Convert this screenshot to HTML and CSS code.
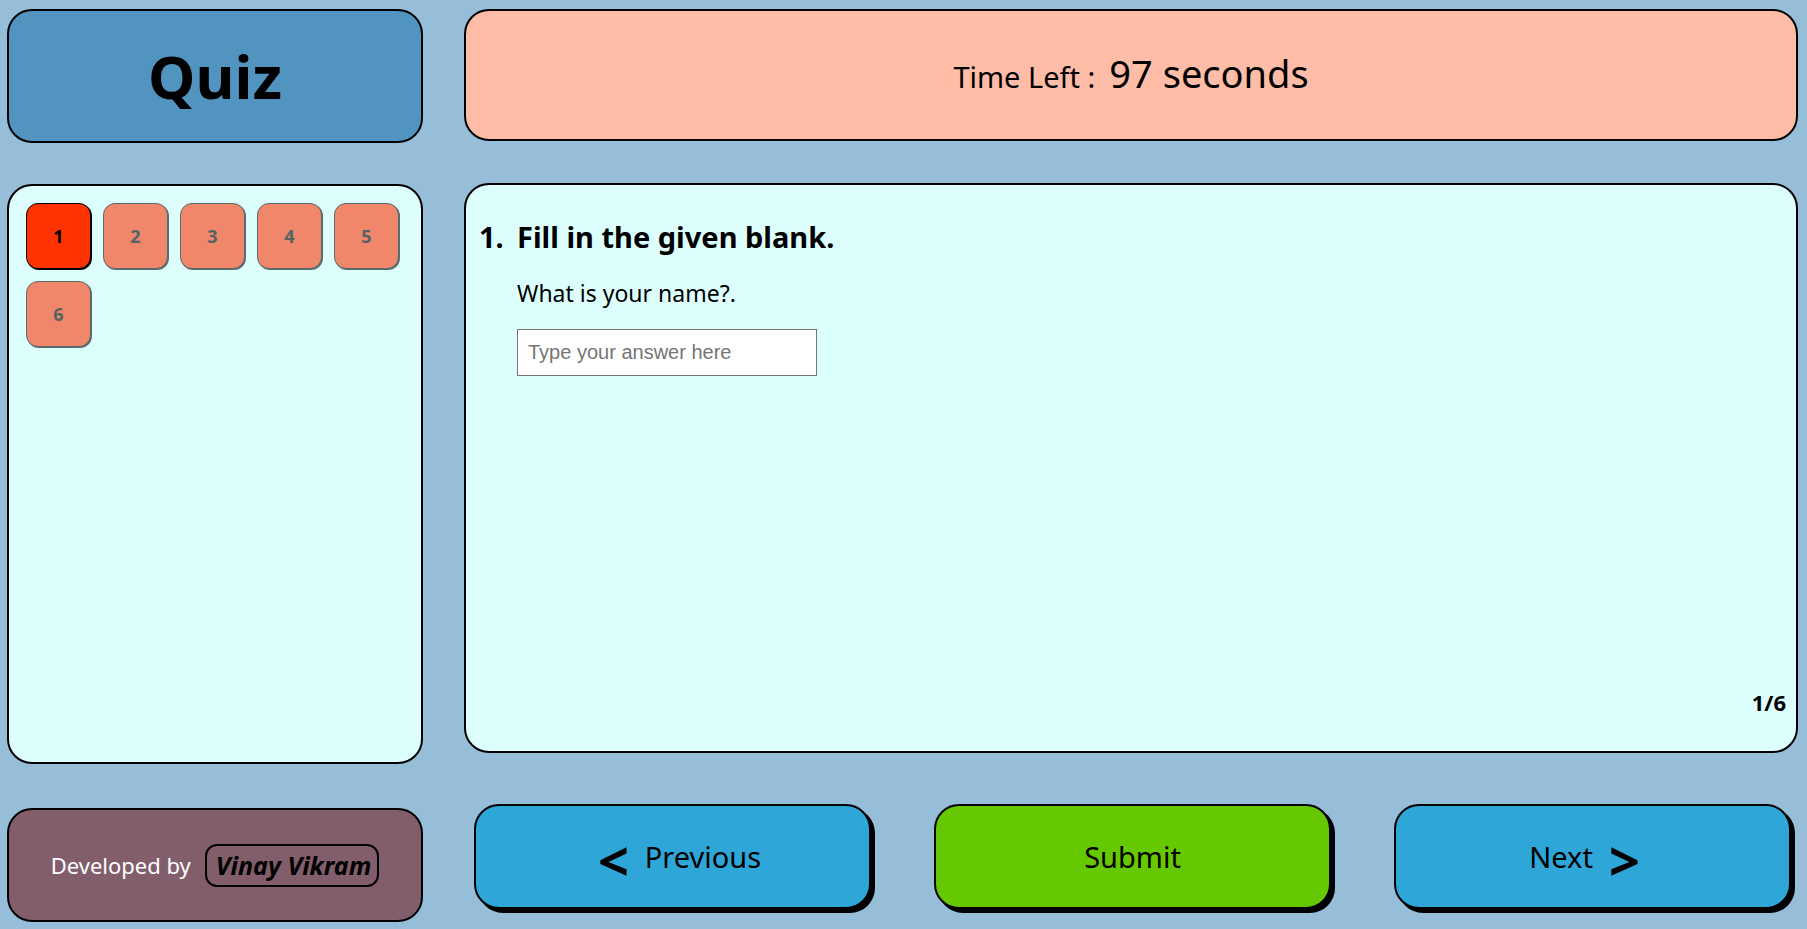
FILE: index.html
```html
<!DOCTYPE html>
<html lang="en">
<head>
<meta charset="utf-8">
<title>Quiz</title>
<link rel="stylesheet" href="styles.css">
</head>
<body>
<div class="app">
  <header class="brand"><h1>Quiz</h1></header>
  <section class="timer">
    <span class="timer-label">Time Left :</span>
    <span class="timer-value">97 seconds</span>
  </section>

  <nav class="palette">
    <button class="qbtn active">1</button>
    <button class="qbtn">2</button>
    <button class="qbtn">3</button>
    <button class="qbtn">4</button>
    <button class="qbtn">5</button>
    <button class="qbtn">6</button>
  </nav>

  <main class="question">
    <div class="q-title"><span class="q-num">1.</span><span>Fill in the given blank.</span></div>
    <p class="q-text">What is your name?.</p>
    <input class="q-input" type="text" placeholder="Type your answer here">
    <div class="q-count">1/6</div>
  </main>

  <footer class="credit">
    <span class="credit-label">Developed by</span>
    <span class="credit-name">Vinay Vikram</span>
  </footer>

  <div class="actions">
    <button class="action prev"><span class="chev">&lt;</span>Previous</button>
    <button class="action submit">Submit</button>
    <button class="action next">Next<span class="chev right">&gt;</span></button>
  </div>
</div>
</body>
</html>
```

FILE: styles.css
```css
* { box-sizing: border-box; }

html, body {
  margin: 0;
  height: 100%;
}

body {
  background: #97bed8;
  font-family: "Noto Sans", "Open Sans", sans-serif;
  color: #000;
}

.app {
  height: 100vh;
  padding: 9px 9px 7px 7px;
  display: grid;
  grid-template-columns: 416px 1fr;
  grid-template-rows: 134px 1fr 118px;
  column-gap: 41px;
  row-gap: 40px;
}

.brand {
  background: #5294c0;
  border: 2px solid #000;
  border-radius: 25px;
  display: flex;
  align-items: center;
  justify-content: center;
}

.brand h1 {
  margin: 0;
  font-size: 60px;
  font-weight: 700;
  line-height: 1;
}

.timer {
  height: 132px;
  background: #ffbca6;
  border: 2px solid #000;
  border-radius: 25px;
  display: flex;
  align-items: baseline;
  justify-content: center;
  padding-top: 36px;
  gap: 14px;
}

.timer-label { font-size: 29px; }
.timer-value { font-size: 38px; }

.palette {
  margin-top: 1px;
  background: #dcfffe;
  border: 2px solid #000;
  border-radius: 25px;
  padding: 17px 17px;
  display: flex;
  flex-wrap: wrap;
  align-content: flex-start;
  gap: 12px 12px;
}

.qbtn {
  width: 65px;
  height: 66px;
  border-radius: 12px;
  border: 1.5px solid #5a6b6b;
  background: #f0866a;
  color: #536464;
  font-family: "Noto Sans", sans-serif;
  font-weight: 700;
  font-size: 18px;
  box-shadow: 1px 1px 0 #5a6b6b;
  padding: 0;
}

.qbtn.active {
  background: #ff3300;
  border-color: #000;
  color: #000;
  box-shadow: 1px 1px 0 #000;
}

.question {
  height: 570px;
  background: #dcfffe;
  border: 2px solid #000;
  border-radius: 25px;
  padding: 32px 10px 10px 13px;
  display: flex;
  flex-direction: column;
  align-items: flex-start;
}

.q-title {
  font-size: 29px;
  font-weight: 700;
  display: flex;
  line-height: 40px;
}

.q-num { width: 38px; }

.q-text {
  margin: 20px 0 0 38px;
  font-size: 23px;
  line-height: 32px;
}

.q-input {
  margin: 20px 0 0 38px;
  width: 300px;
  height: 47px;
  border: 1px solid #767676;
  background: #fff;
  font-family: "Liberation Sans", Arial, sans-serif;
  font-size: 20px;
  padding: 0 10px;
}

.q-input::placeholder { color: #757575; }

.q-count {
  margin-top: auto;
  align-self: flex-end;
  font-size: 22px;
  font-weight: 700;
  margin-bottom: 24px;
}

.credit {
  align-self: end;
  height: 114px;
  background: #825e6c;
  border: 2px solid #000;
  border-radius: 25px;
  display: flex;
  align-items: center;
  justify-content: center;
  gap: 14px;
}

.credit-label {
  color: #fff;
  font-size: 22px;
}

.credit-name {
  border: 2px solid #000;
  border-radius: 12px;
  padding: 2px 6px 3px 9px;
  font-size: 25px;
  font-weight: 700;
  font-style: italic;
}

.actions {
  display: flex;
  justify-content: space-between;
  align-items: flex-start;
  padding: 0 7px 0 10px;
}

.action {
  width: 397px;
  height: 105px;
  border: 2px solid #000;
  border-radius: 25px;
  box-shadow: 4px 4px 0 #000;
  font-family: "Noto Sans", sans-serif;
  font-size: 29px;
  color: #000;
  display: flex;
  align-items: center;
  justify-content: center;
  gap: 16px;
  padding: 0;
}

.prev, .next { background: #2ea6d8; }
.prev { padding-left: 14px; }
.next { padding-right: 16px; }
.submit { background: #66c800; }

.chev {
  font-size: 54px;
  font-weight: 700;
  line-height: 1;
  position: relative;
  top: 3px;
}
```
